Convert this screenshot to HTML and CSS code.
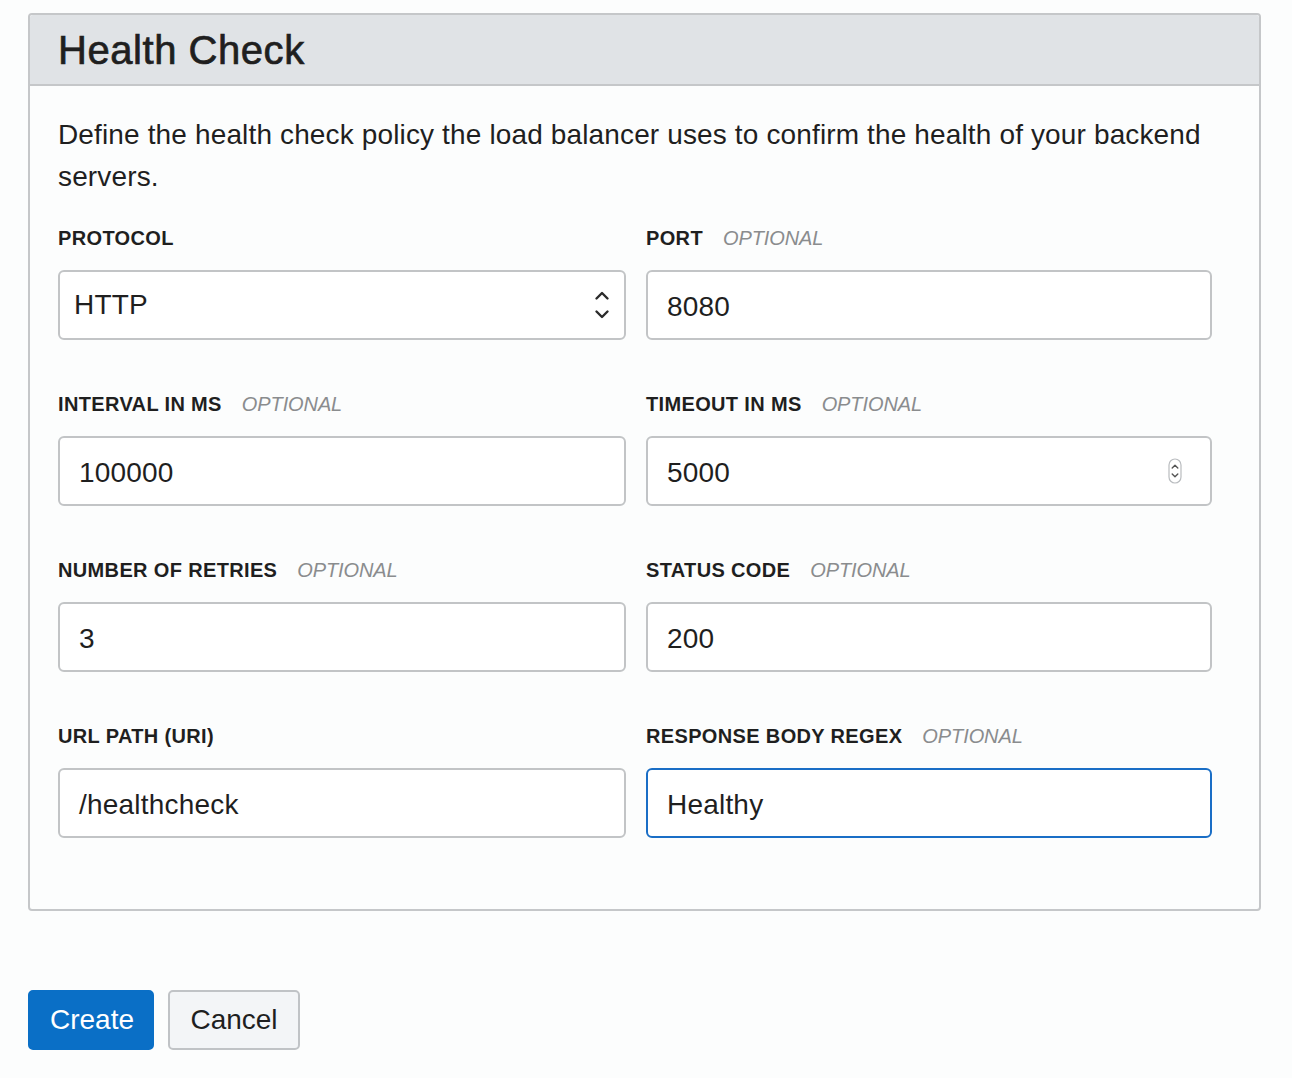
FILE: index.html
```html
<!DOCTYPE html>
<html lang="en">
<head>
<meta charset="utf-8">
<title>Health Check</title>
<link rel="stylesheet" href="styles.css">
</head>
<body>
<div class="page">
  <section class="panel">
    <header class="panel-header">
      <h1 class="panel-title">Health Check</h1>
    </header>
    <div class="panel-body">
      <p class="desc">Define the health check policy the load balancer uses to confirm the health of your backend servers.</p>
      <div class="form-grid">
        <div class="field">
          <div class="label">PROTOCOL</div>
          <div class="control select">
            <span class="value">HTTP</span>
            <svg class="select-icon" width="16" height="32" viewBox="0 0 16 32" aria-hidden="true">
              <path d="M2.5 9.5 L8 4 L13.5 9.5" fill="none" stroke="#2b2b2b" stroke-width="2.4" stroke-linecap="round" stroke-linejoin="round"/>
              <path d="M2.5 22.5 L8 28 L13.5 22.5" fill="none" stroke="#2b2b2b" stroke-width="2.4" stroke-linecap="round" stroke-linejoin="round"/>
            </svg>
          </div>
        </div>
        <div class="field">
          <div class="label">PORT<span class="opt">OPTIONAL</span></div>
          <div class="control input"><span class="value">8080</span></div>
        </div>

        <div class="field">
          <div class="label">INTERVAL IN MS<span class="opt">OPTIONAL</span></div>
          <div class="control input"><span class="value">100000</span></div>
        </div>
        <div class="field">
          <div class="label">TIMEOUT IN MS<span class="opt">OPTIONAL</span></div>
          <div class="control input spin">
            <span class="value">5000</span>
            <svg class="spin-icon" width="14" height="26" viewBox="0 0 14 26" aria-hidden="true">
              <rect x="1" y="1" width="12" height="24" rx="6" ry="6" fill="#fff" stroke="#b9bcbf" stroke-width="1.2"/>
              <path d="M4.2 10 L7 7.2 L9.8 10" fill="none" stroke="#555" stroke-width="1.4" stroke-linecap="round" stroke-linejoin="round"/>
              <path d="M4.2 16 L7 18.8 L9.8 16" fill="none" stroke="#555" stroke-width="1.4" stroke-linecap="round" stroke-linejoin="round"/>
            </svg>
          </div>
        </div>

        <div class="field">
          <div class="label">NUMBER OF RETRIES<span class="opt">OPTIONAL</span></div>
          <div class="control input"><span class="value">3</span></div>
        </div>
        <div class="field">
          <div class="label">STATUS CODE<span class="opt">OPTIONAL</span></div>
          <div class="control input"><span class="value">200</span></div>
        </div>

        <div class="field">
          <div class="label">URL PATH (URI)</div>
          <div class="control input"><span class="value">/healthcheck</span></div>
        </div>
        <div class="field">
          <div class="label">RESPONSE BODY REGEX<span class="opt">OPTIONAL</span></div>
          <div class="control input focused"><span class="value">Healthy</span></div>
        </div>
      </div>
    </div>
  </section>

  <div class="actions">
    <button class="btn btn-primary" type="button">Create</button>
    <button class="btn btn-secondary" type="button">Cancel</button>
  </div>
</div>
</body>
</html>
```

FILE: styles.css
```css
* {
  box-sizing: border-box;
}

html, body {
  margin: 0;
  padding: 0;
  background: #fcfdfd;
}

body {
  font-family: "Liberation Sans", Arial, Helvetica, sans-serif;
  color: #1f1f1f;
}

.page {
  padding: 13px 31px 0 28px;
}

.panel {
  border: 2px solid #c5c7c9;
  border-radius: 4px;
  background: #fcfdfd;
}

.panel-header {
  background: #e0e3e6;
  border-bottom: 2px solid #c5c7c9;
  height: 71px;
  display: flex;
  align-items: center;
  padding-left: 28px;
  border-radius: 3px 3px 0 0;
}

.panel-title {
  margin: 0;
  font-size: 40px;
  font-weight: normal;
  -webkit-text-stroke: 0.7px #1f1f1f;
  letter-spacing: 0.55px;
  line-height: 1;
  color: #1f1f1f;
}

.panel-body {
  padding: 28px 47px 71px 28px;
}

.desc {
  margin: 0;
  font-size: 28px;
  line-height: 42px;
  letter-spacing: 0.14px;
  color: #1f1f1f;
}

.form-grid {
  margin-top: 28px;
  display: grid;
  grid-template-columns: 568px 566px;
  column-gap: 20px;
  row-gap: 52px;
}

.field {
  display: flex;
  flex-direction: column;
  gap: 20px;
}

.label {
  font-size: 20px;
  line-height: 24px;
  font-weight: bold;
  letter-spacing: 0.35px;
  color: #1f1f1f;
  white-space: nowrap;
}

.opt {
  font-weight: normal;
  font-style: italic;
  color: #8a8c8e;
  margin-left: 20px;
  letter-spacing: -0.1px;
}

.control {
  height: 70px;
  border: 2px solid #c2c4c6;
  border-radius: 6px;
  background: #ffffff;
  display: flex;
  align-items: center;
  justify-content: space-between;
  font-size: 28px;
  color: #1f1f1f;
}

.control .value {
  letter-spacing: 0.2px;
}

.control.input {
  padding: 3px 24px 0 19px;
}

.control.input.spin {
  padding-right: 28px;
}

.control.input.spin .spin-icon {
  margin-top: -3px;
}

.control.select {
  padding: 0 14px 0 14px;
}

.control.select .value {
  margin-top: -1px;
}

.control.focused {
  border-color: #1a6ec6;
}

.select-icon {
  display: block;
}

.spin-icon {
  display: block;
}

.actions {
  margin-top: 79px;
  display: flex;
  gap: 14px;
}

.btn {
  height: 60px;
  border-radius: 5px;
  font-family: "Liberation Sans", Arial, Helvetica, sans-serif;
  font-size: 28px;
  padding: 0 20px;
  border: 2px solid transparent;
  cursor: pointer;
}

.btn-primary {
  background: #0a6fc6;
  border-color: #0a6fc6;
  color: #ffffff;
  width: 126px;
}

.btn-secondary {
  background: #f3f5f7;
  border-color: #c0c3c6;
  color: #1f1f1f;
  width: 132px;
}
```
